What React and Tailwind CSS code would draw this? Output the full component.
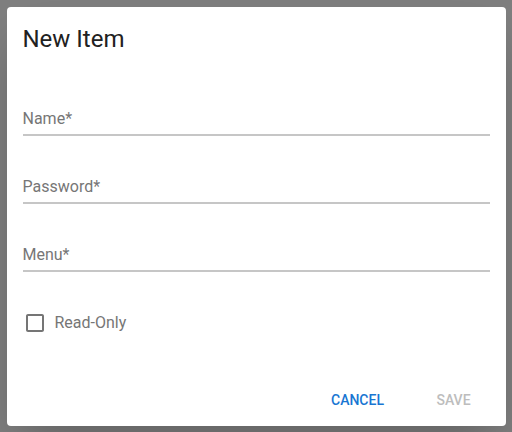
import React from 'react';

const Field = ({ label }) => (
  <div className="mt-[39px] border-b-2 border-[#c6c6c6] pb-[3px]">
    <div className="text-base leading-6 text-[#767676]">{label}</div>
  </div>
);

const App = () => {
  return (
    <div
      className="w-full h-[432px] bg-[#7f7f7f] flex items-center justify-center"
      style={{ fontFamily: 'Roboto, "Liberation Sans", sans-serif' }}
    >
      <div className="w-[499px] h-[419px] bg-white rounded-[4px] shadow-2xl flex flex-col">
        {/* Title */}
        <div className="px-4 pt-4">
          <h2 className="text-2xl leading-8 font-normal text-[#212121]">New Item</h2>
        </div>

        {/* Content */}
        <div className="px-4 pt-[13px]">
          <Field label="Name*" />
          <Field label="Password*" />
          <Field label="Menu*" />

          <div className="mt-[39px] flex items-center h-6">
            <svg viewBox="0 0 24 24" className="w-6 h-6 fill-[#757575]">
              <path d="M19 5v14H5V5h14m0-2H5c-1.1 0-2 .9-2 2v14c0 1.1.9 2 2 2h14c1.1 0 2-.9 2-2V5c0-1.1-.9-2-2-2z" />
            </svg>
            <span className="ml-2 text-base leading-6 text-[#767676]">Read-Only</span>
          </div>
        </div>

        {/* Actions */}
        <div className="mt-auto flex justify-end gap-2 p-2">
          <button className="min-w-[88px] h-9 px-4 text-sm font-medium uppercase text-[#1976d2] rounded">
            Cancel
          </button>
          <button disabled className="min-w-[88px] h-9 px-4 text-sm font-medium uppercase text-[#bdbdbd] rounded">
            Save
          </button>
        </div>
      </div>
    </div>
  );
};

export default App;
